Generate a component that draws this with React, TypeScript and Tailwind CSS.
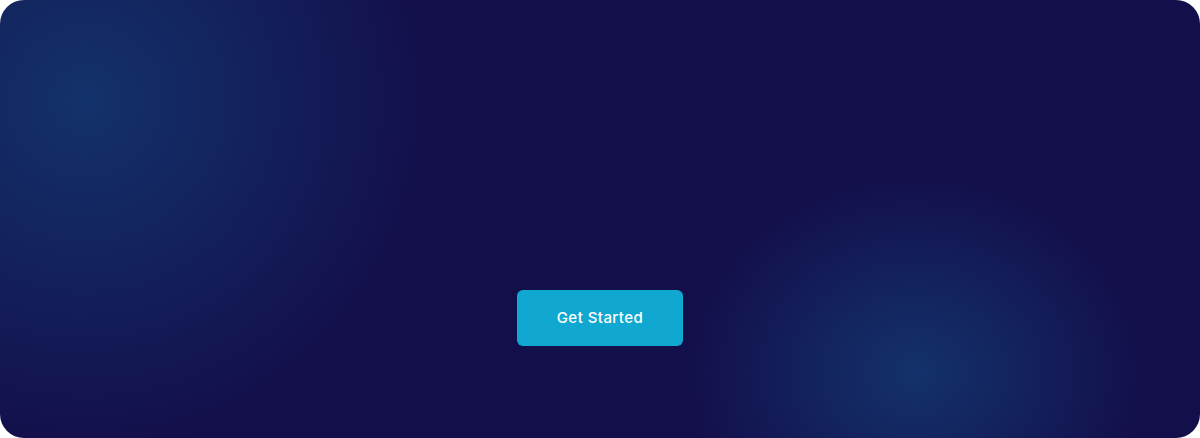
export default function App() {
  return (
    <div className="h-[438px] w-[1200px] bg-white">
      <section className="flex h-full w-full flex-col items-center rounded-3xl bg-[#130f4b] bg-[radial-gradient(circle_350px_at_85px_100px,#13326b_0%,rgba(19,15,75,0)_100%),radial-gradient(ellipse_230px_200px_at_915px_372px,#13326b_0%,rgba(19,15,75,0)_100%)] pt-[290px]">
        <button
          className="flex h-14 w-[166px] items-center justify-center rounded-md bg-[#10a8d0] text-[15px] font-medium tracking-[0.03em] text-white"
          style={{ fontFamily: "Inter, 'Open Sans', sans-serif" }}
        >
          Get Started
        </button>
      </section>
    </div>
  );
}
